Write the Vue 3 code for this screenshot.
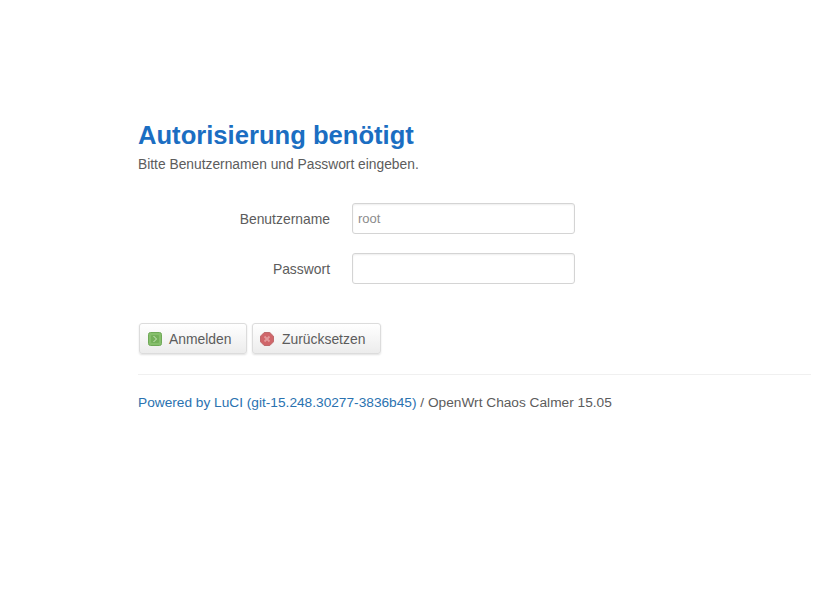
<template>
  <div class="page">
    <form class="login" @submit.prevent>
      <h2 class="title">Autorisierung benötigt</h2>
      <p class="intro">Bitte Benutzernamen und Passwort eingeben.</p>

      <div class="fields">
        <div class="row">
          <label class="label" for="user">Benutzername</label>
          <input id="user" v-model="username" class="input" type="text" />
        </div>
        <div class="row">
          <label class="label" for="pass">Passwort</label>
          <input id="pass" v-model="password" class="input" type="password" />
        </div>
      </div>

      <div class="actions">
        <button class="btn btn-login" type="submit">
          <svg class="icon" width="14" height="14" viewBox="0 0 14 14">
            <rect x="0.5" y="0.5" width="13" height="13" rx="2" fill="#86bf6c" stroke="#6fa957" />
            <rect x="3" y="3" width="8" height="8" rx="1" fill="#74b05a" />
            <path d="M5.5 4 L8.5 7 L5.5 10" fill="none" stroke="#cfe8c3" stroke-width="1" />
          </svg>
          Anmelden
        </button>
        <button class="btn btn-reset" type="reset">
          <svg class="icon" width="14" height="14" viewBox="0 0 14 14">
            <path d="M4.2 0.5 H9.8 L13.5 4.2 V9.8 L9.8 13.5 H4.2 L0.5 9.8 V4.2 Z" fill="#d0666a" stroke="#bd6a6c" />
            <path d="M4.5 4.5 L9.5 9.5 M9.5 4.5 L4.5 9.5" stroke="#e39a9c" stroke-width="1.8" />
          </svg>
          Zurücksetzen
        </button>
      </div>
    </form>

    <footer class="footer">
      <a class="link" href="#">Powered by LuCI (git-15.248.30277-3836b45)</a>
      / OpenWrt Chaos Calmer 15.05
    </footer>
  </div>
</template>

<script setup>
import { ref } from "vue";

const username = ref("root");
const password = ref("");
</script>

<style>
html,
body {
  margin: 0;
  background: #fff;
}
</style>

<style scoped>
.page {
  box-sizing: border-box;
  width: 814px;
  height: 613px;
  padding: 120px 3px 0 138px;
  overflow: hidden;
  font-family: "Liberation Sans", Arial, sans-serif;
  font-size: 14px;
  color: #4a4a4a;
}

.title {
  margin: 0;
  font-size: 25.6px;
  line-height: 30px;
  font-weight: bold;
  color: #1b6ec2;
}

.intro {
  margin: 6px 0 0;
  font-size: 13.8px;
  line-height: 17px;
  color: #5c5c5c;
}

.fields {
  display: flex;
  flex-direction: column;
  gap: 19px;
  margin-top: 30px;
}

.row {
  display: flex;
  align-items: center;
}

.label {
  width: 192px;
  text-align: right;
  font-size: 13.9px;
  color: #5c5c5c;
}

.input {
  box-sizing: border-box;
  width: 223px;
  height: 31px;
  margin-left: 22px;
  padding: 0 5px;
  border: 1px solid #d4d4d4;
  border-radius: 3px;
  box-shadow: inset 0 1px 2px rgba(0, 0, 0, 0.07);
  font-family: inherit;
  font-size: 13px;
  color: #8c8c8c;
  outline: none;
}

.actions {
  display: flex;
  gap: 5px;
  margin-top: 39px;
}

.btn {
  display: flex;
  align-items: center;
  box-sizing: border-box;
  height: 31px;
  border: 1px solid #dcdcdc;
  border-radius: 3px;
  background: linear-gradient(#fff, #ececec);
  box-shadow: 0 1px 2px rgba(0, 0, 0, 0.12);
  font-family: inherit;
  font-size: 13.9px;
  color: #5c5c5c;
  cursor: pointer;
}

.btn-login {
  width: 108px;
  margin-left: 1px;
  padding: 0 0 0 8px;
}

.btn-reset {
  width: 129px;
  padding: 0 0 0 7px;
}

.icon {
  margin-right: 7px;
  flex: none;
}

.btn-reset .icon {
  margin-right: 8px;
}

.footer {
  margin-top: 20px;
  padding-top: 19px;
  border-top: 1px solid #f0f0f0;
  font-size: 13.7px;
  line-height: 17px;
  color: #5c5c5c;
}

.link {
  color: #2a72b0;
  text-decoration: none;
}
</style>
